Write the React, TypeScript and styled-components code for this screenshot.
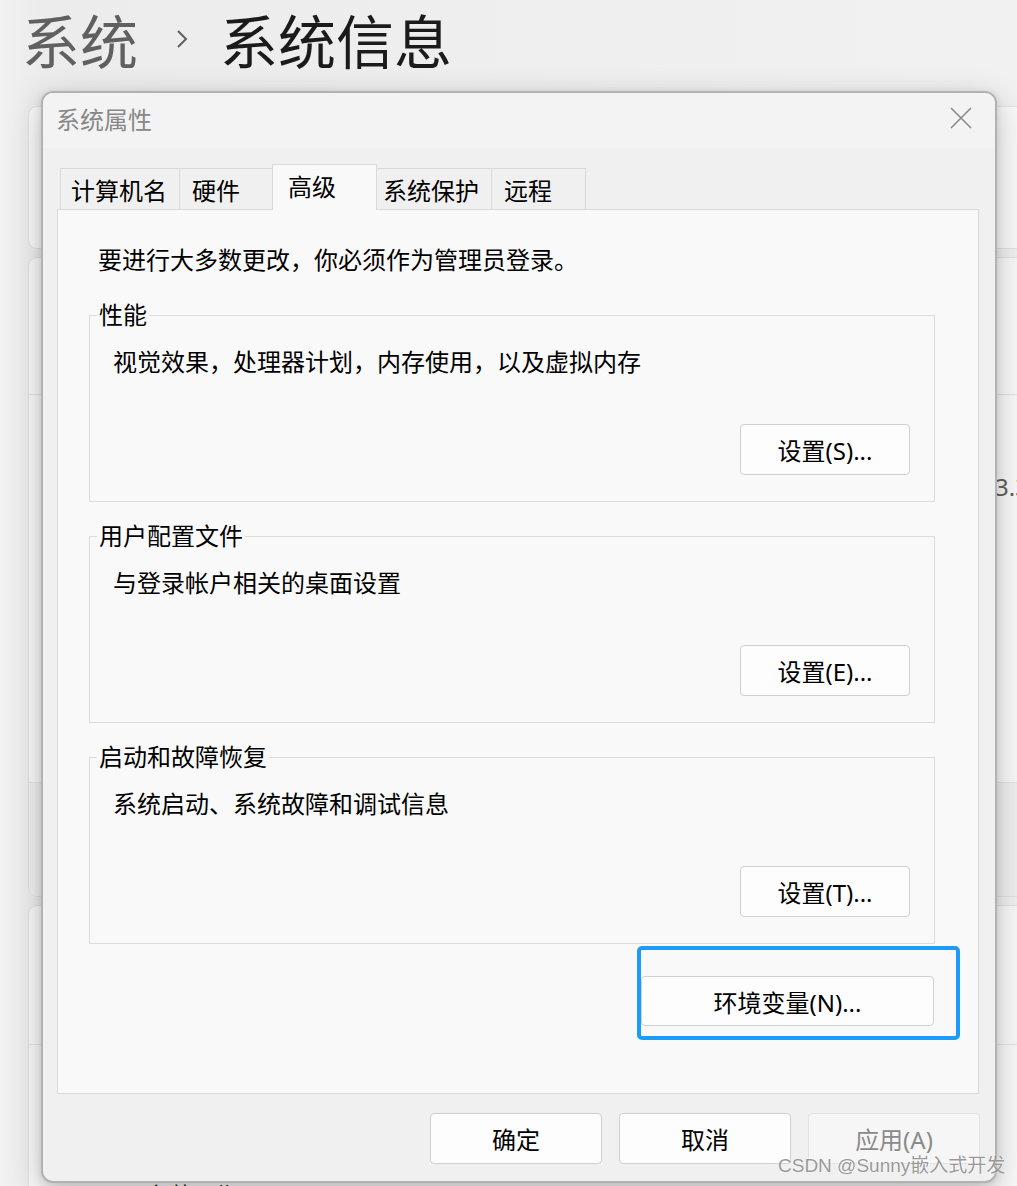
import React from 'react'
import styled, { createGlobalStyle } from 'styled-components'

const tabs = [
  { label: '计算机名', width: 120, pad: 10 },
  { label: '硬件', width: 94, pad: 12 },
  { label: '高级', width: 105, pad: 15, selected: true },
  { label: '系统保护', width: 116, pad: 6 },
  { label: '远程', width: 95, pad: 12 },
]

const groups = [
  { title: '性能', desc: '视觉效果，处理器计划，内存使用，以及虚拟内存', button: '设置(S)...' },
  { title: '用户配置文件', desc: '与登录帐户相关的桌面设置', button: '设置(E)...' },
  { title: '启动和故障恢复', desc: '系统启动、系统故障和调试信息', button: '设置(T)...' },
]

function App() {
  return (
    <>
      <GlobalStyle />
      <Page>
        <Header>
          <Crumb>系统</Crumb>
          <Chevron viewBox="0 0 26 20" width="26" height="20">
            <path d="M8 2 L16 10 L8 18" fill="none" stroke="#5f5f5f" strokeWidth="2" />
          </Chevron>
          <Crumb $current>系统信息</Crumb>
        </Header>

        <Cards>
          <Card $height={143} />
          <Card $height={640}>
            <CardRow $height={136} />
            <CardRow $height={388} $pad={31}>
              <Spec>
                <SpecLabel>设备名称</SpecLabel>
                <SpecValue>DESKTOP-SUNNY</SpecValue>
              </Spec>
              <Spec>
                <SpecLabel>处理器</SpecLabel>
                <SpecValue>12th Gen Intel(R) Core(TM) i5-12500H</SpecValue>
                <SpecValue>3.30 GHz</SpecValue>
              </Spec>
            </CardRow>
            <CardRow $height={116} $shade />
          </Card>
          <Card $height={400}>
            <CardRow $height={138} />
            <CardRow $height={260} $pad={49}>
              <Spec>
                <SpecLabel>版本</SpecLabel>
                <SpecValue>Windows 11 家庭中文版</SpecValue>
              </Spec>
              <Spec>
                <SpecLabel>版本</SpecLabel>
                <SpecValue>22H2</SpecValue>
              </Spec>
              <Spec>
                <SpecLabel>安装日期</SpecLabel>
                <SpecValue>2023/6/10</SpecValue>
              </Spec>
            </CardRow>
          </Card>
        </Cards>

        <Dialog>
          <TitleBar>
            <Title>系统属性</Title>
            <svg width="22" height="22" viewBox="0 0 22 22">
              <path d="M1 1 L21 21 M21 1 L1 21" stroke="#8a8a8a" strokeWidth="1.6" fill="none" />
            </svg>
          </TitleBar>
          <Body>
            <TabRow>
              {tabs.map((t) => (
                <Tab key={t.label} $width={t.width} $pad={t.pad} $selected={!!t.selected}>
                  {t.label}
                </Tab>
              ))}
            </TabRow>
            <Panel>
              <Intro>要进行大多数更改，你必须作为管理员登录。</Intro>
              {groups.map((g) => (
                <Group key={g.title}>
                  <Legend>{g.title}</Legend>
                  <Desc>{g.desc}</Desc>
                  <GroupButton>{g.button}</GroupButton>
                </Group>
              ))}
              <EnvWrap>
                <EnvButton>环境变量(N)...</EnvButton>
                <Highlight />
              </EnvWrap>
            </Panel>
            <Footer>
              <DialogButton>确定</DialogButton>
              <DialogButton>取消</DialogButton>
              <DialogButton $disabled>应用(A)</DialogButton>
            </Footer>
          </Body>
        </Dialog>

        <Watermark>CSDN @Sunny嵌入式开发</Watermark>
      </Page>
    </>
  )
}

export default App

const GlobalStyle = createGlobalStyle`
  body {
    margin: 0;
    background: #efefef;
    font-family: "Noto Sans", "Noto Sans CJK SC", sans-serif;
  }
`

const Page = styled.div`
  position: relative;
  width: 1017px;
  height: 1186px;
  overflow: hidden;
  background: linear-gradient(90deg, #f1f1f1, #ececec 40px, #f1f1f1);
`

const Header = styled.div`
  display: flex;
  align-items: center;
  height: 70px;
  padding: 4px 0 0 22px;
`

const Crumb = styled.span<{ $current?: boolean }>`
  font-family: "Noto Sans CJK SC", sans-serif;
  font-size: 58px;
  line-height: 70px;
  color: ${(p) => (p.$current ? '#1b1b1b' : '#606060')};
`

const Chevron = styled.svg`
  margin: 0 24px 0 32px;
`

const Cards = styled.div`
  display: flex;
  flex-direction: column;
  gap: 8px;
  margin: 32px 0 0 28px;
  width: 1100px;
`

const Card = styled.div<{ $height: number }>`
  height: ${(p) => p.$height}px;
  box-sizing: border-box;
  background: #f9f9f9;
  border: 1px solid #e2e2e2;
  border-radius: 9px;
  overflow: hidden;
`

const CardRow = styled.div<{ $height: number; $pad?: number; $shade?: boolean }>`
  height: ${(p) => p.$height}px;
  box-sizing: border-box;
  padding: ${(p) => p.$pad ?? 0}px 0 0 116px;
  background: ${(p) => (p.$shade ? '#f0f0f0' : 'transparent')};
  & + & {
    border-top: 1px solid #e4e4e4;
  }
`

const Spec = styled.div`
  display: grid;
  grid-template-columns: 220px 630px auto;
  height: 40px;
  align-items: center;
  font-family: "Noto Sans", "Noto Sans CJK SC", sans-serif;
  font-size: 24px;
  white-space: nowrap;
`

const SpecLabel = styled.span`
  color: #1b1b1b;
`

const SpecValue = styled.span`
  color: #5f5f5f;
`

const Dialog = styled.div`
  position: absolute;
  left: 41px;
  top: 91px;
  width: 956px;
  height: 1092px;
  box-sizing: border-box;
  display: flex;
  flex-direction: column;
  border: 2px solid #b2b2b2;
  border-radius: 12px;
  overflow: hidden;
  background: #f0f0f0;
  box-shadow: 0 10px 34px rgba(0, 0, 0, 0.22), 0 2px 8px rgba(0, 0, 0, 0.12);
  font-family: "Noto Sans", "Noto Sans CJK SC", sans-serif;
  color: #000;
`

const TitleBar = styled.div`
  height: 55px;
  box-sizing: border-box;
  flex: none;
  display: flex;
  align-items: center;
  justify-content: space-between;
  padding: 0 23px 5px 13px;
  background: #f3f3f3;
`

const Title = styled.span`
  font-size: 24px;
  color: #888;
  font-family: "Noto Sans CJK SC", sans-serif;
`

const Body = styled.div`
  flex: 1;
  display: flex;
  flex-direction: column;
  padding: 16px 16px 0 14px;
`

const TabRow = styled.div`
  display: flex;
  align-items: flex-end;
  padding-left: 3px;
  position: relative;
  z-index: 2;
`

const Tab = styled.div<{ $width: number; $pad: number; $selected: boolean }>`
  width: ${(p) => p.$width}px;
  height: ${(p) => (p.$selected ? 46 : 41)}px;
  margin-bottom: ${(p) => (p.$selected ? -1 : 0)}px;
  box-sizing: border-box;
  display: flex;
  align-items: center;
  padding: ${(p) => (p.$selected ? `0 0 2px ${p.$pad}px` : `3px 0 0 ${p.$pad}px`)};
  border: 1px solid #d9d9d9;
  border-bottom: none;
  background: ${(p) => (p.$selected ? '#f9f9f9' : '#f0f0f0')};
  font-size: 24px;
  line-height: 32px;
  & + & {
    margin-left: -1px;
  }
`

const Panel = styled.div`
  height: 885px;
  box-sizing: border-box;
  display: flex;
  flex-direction: column;
  padding: 34px 43px 0 31px;
  background: #f9f9f9;
  border: 1px solid #d9d9d9;
`

const Intro = styled.div`
  font-size: 24px;
  line-height: 32px;
  margin: 0 0 23px 9px;
`

const Group = styled.fieldset`
  margin: 0 0 18px;
  padding: 0 24px 26px 23px;
  min-width: 0;
  display: flex;
  flex-direction: column;
  border: 1px solid #dcdcdc;
`

const Legend = styled.legend`
  margin-left: -16px;
  padding: 0 2px;
  font-size: 24px;
  line-height: 32px;
`

const Desc = styled.div`
  margin-top: 15px;
  font-size: 24px;
  line-height: 32px;
`

const ButtonBase = styled.div`
  box-sizing: border-box;
  display: flex;
  align-items: center;
  justify-content: center;
  background: #fdfdfd;
  border: 1px solid #d0d0d0;
  border-radius: 4px;
  font-size: 24px;
`

const GroupButton = styled(ButtonBase)`
  align-self: flex-end;
  margin-top: 46px;
  width: 170px;
  height: 51px;
`

const EnvWrap = styled.div`
  position: relative;
  align-self: flex-end;
  margin: 14px 1px 0 0;
`

const EnvButton = styled(ButtonBase)`
  width: 293px;
  height: 50px;
`

const Highlight = styled.div`
  position: absolute;
  left: -4px;
  top: -30px;
  right: -26px;
  bottom: -14px;
  border: 4px solid #1e9af7;
  border-radius: 5px;
`

const Footer = styled.div`
  display: flex;
  justify-content: flex-end;
  gap: 17px;
  margin: 19px -1px 0 0;
`

const DialogButton = styled(ButtonBase)<{ $disabled?: boolean }>`
  width: 172px;
  height: 51px;
  color: ${(p) => (p.$disabled ? '#8a8a8a' : '#000')};
  background: ${(p) => (p.$disabled ? '#f6f6f6' : '#fdfdfd')};
  border-color: ${(p) => (p.$disabled ? '#e3e3e3' : '#d0d0d0')};
`

const Watermark = styled.div`
  position: absolute;
  left: 778px;
  top: 1153px;
  font-family: "Liberation Sans", "Noto Sans CJK SC", sans-serif;
  font-size: 19px;
  line-height: 26px;
  color: rgba(120, 120, 120, 0.75);
  text-shadow: 0 0 2px #fff;
  white-space: nowrap;
`
